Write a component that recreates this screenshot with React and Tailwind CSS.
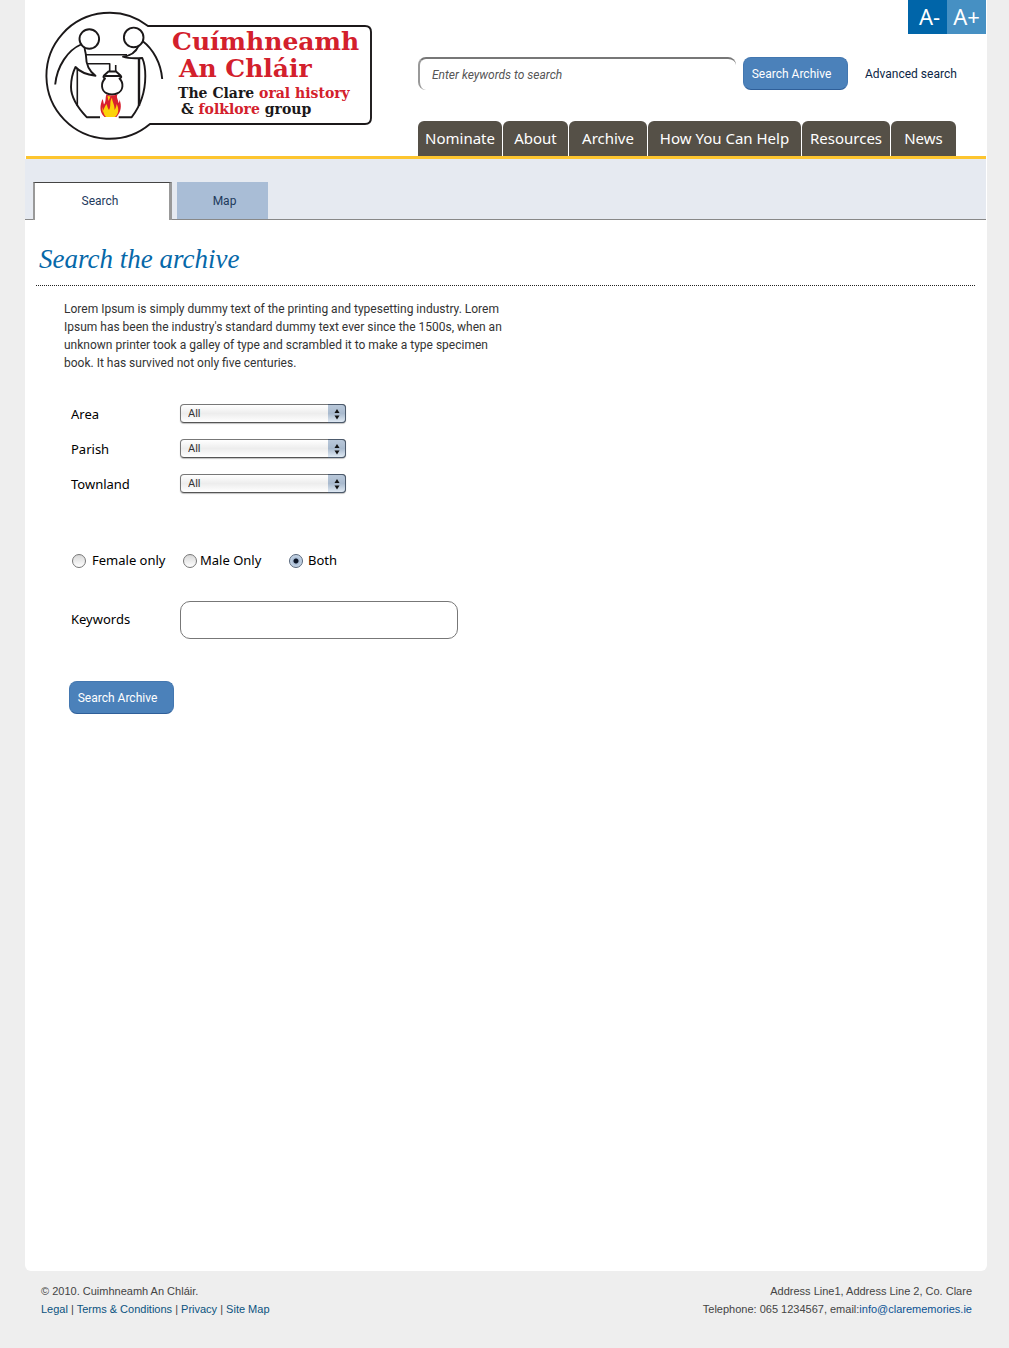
const NAV = [
  { label: "Nominate", width: "w-[84px]" },
  { label: "About", width: "w-[65px]" },
  { label: "Archive", width: "w-[78px]" },
  { label: "How You Can Help", width: "w-[153px]" },
  { label: "Resources", width: "w-[88px]" },
  { label: "News", width: "w-[65px]" },
];

function Logo() {
  return (
    <svg
      viewBox="44 11 330 130"
      className="block h-[130px] w-[330px]"
      role="img"
      aria-label="Cuímhneamh An Chláir"
    >
      <g fill="none" stroke="#1b1819" strokeWidth="1.9" strokeLinejoin="round">
        <path d="M148 26H365q6 0 6 6V118q0 6-6 6H150A63 63 0 1 1 148 26Z" fill="#fff" />
        <circle cx="89.3" cy="39" r="9.8" />
        <circle cx="133.7" cy="37.4" r="9.8" />
        <path d="M81 44.5C68 50 57 66 55.2 84.5" />
        <path d="M142.5 41C153 49 161 63 162.2 79" />
        <path d="M100 117.2H86.7C79 109 71 99 71 87C71 79 73 72 75.5 67C79 71 86 74.500 95.500 75.700C89 71 86 63 86 56C86 53 84.700 51 84.700 48" />
        <path d="M118.700 117.200H131.700C139.500 107 145.300 92 145.300 76C145.300 69 144 62 142.300 58C136 58.500 128 58.500 123 56.700C130 56 136 52 138.700 45.700" />
        <path d="M86 54.700H127M87.500 63.700H109.700V71M115.700 65V71M77.300 69V106" strokeWidth="1.600" />
        <path d="M139 59V106" strokeWidth="2.400" />
        <path d="M109 71L104 75.500Q102.500 77.500 105 78.500C100.500 83 101 91 107 93.500Q112 95.500 117 93.500C123.500 91 124 83 119.500 78.500Q122.500 77.500 120.500 75.500L115.500 71M104.500 76H120.500M109 71.500H115.500" />
      </g>
      <path
        d="M104.500 117C99 112 100 105 102.500 99C103.500 101 103.500 103 104 104.500C106.500 101 105 97 106.500 94.500Q111 96.500 117.500 94.500C116 97 118 99 118.500 103C119.500 102 119.500 100.500 119.500 99.500C122 106 121 112 116.500 117Z"
        fill="#d9202e"
      />
      <path
        d="M106 117C101.500 112 104 108 106.500 104C107.500 107 108 109 109 110C111.500 106 109 102 112 97.500C112 102 115 105 114.500 110C116 108 116.500 106 116.500 104C119.500 109 118.500 114 115 117Z"
        fill="#fcd20a"
      />
      <path d="M107.500 96L108.500 101L110.500 96.500ZM102 107L104 111L103 113Z" fill="#fcd20a" />
      <g fontFamily="'DejaVu Serif', serif" fontWeight="bold">
        <text x="172" y="50" fontSize="25" fill="#d3202c">Cuímhneamh</text>
        <text x="179" y="77" fontSize="25" fill="#d3202c">An Chláir</text>
        <text x="178" y="98" fontSize="14" fill="#1b1819">
          The Clare <tspan fill="#d3202c">oral history</tspan>
        </text>
        <text x="181" y="114" fontSize="14" fill="#1b1819">
          &amp; <tspan fill="#d3202c">folklore</tspan> group
        </text>
      </g>
    </svg>
  );
}

function SearchButton() {
  return (
    <button
      type="submit"
      className="h-[33px] w-[105px] rounded-lg border border-[#4377b0] border-b-[#2f5f99] bg-[#4b81ba] pr-2 text-center text-xs text-white"
    >
      Search Archive
    </button>
  );
}

function SelectRow({ id, label }) {
  return (
    <div className="flex h-5 items-start">
      <label htmlFor={id} className="w-[109px] leading-5">
        {label}
      </label>
      <div className="relative h-[19px] w-[166px]">
        <select
          id={id}
          className="block h-full w-full appearance-none rounded border border-[#777] border-b-[#555] bg-linear-to-b from-white via-[#ededed] to-white pl-[7px] font-['Roboto',sans-serif] text-[11px] leading-4 text-[#333] shadow-[0_1px_1px_rgba(0,0,0,0.25)]"
        >
          <option>All</option>
        </select>
        <span className="pointer-events-none absolute inset-y-0 right-0 flex w-[18px] items-center justify-center rounded-r border border-l-0 border-[#4c5a6c] bg-linear-to-b from-[#b9c8da] via-[#a9bace] to-[#dfe9f3]">
          <svg viewBox="0 0 6 12" className="h-3 w-1.5" aria-hidden="true">
            <path d="M3 1L5.500 5H0.500ZM3 11.500L5.500 7.500H0.500Z" fill="#111" />
          </svg>
        </span>
      </div>
    </div>
  );
}

function RadioOption({ label, className, defaultChecked }) {
  return (
    <label className={"flex items-center " + className}>
      <input
        type="radio"
        name="gender"
        defaultChecked={defaultChecked}
        className="size-3.5 appearance-none rounded-full border border-[#777] bg-linear-to-b from-[#d8d8d8] to-white checked:border-[#56657a] checked:bg-[radial-gradient(circle,#0c1526_0_2px,#a9bcd4_3px,#c9d8e8_6px)]"
      />
      {label}
    </label>
  );
}

export default function App() {
  return (
    <div className="flex min-h-screen flex-col bg-[#eee] pr-[22px] pl-[25px] font-['Roboto',sans-serif] text-xs text-[#333]">
      <div className="flex-1 rounded-b-md bg-white">
        <header className="mr-px ml-px flex justify-between border-b-[3px] border-[#fdc52f]">
          <div className="pt-[11px] pl-[18px]">
            <Logo />
          </div>
          <div className="w-[568px]">
            <div className="flex h-[34px] justify-end font-['Noto_Sans',sans-serif] text-[22px] text-white">
              <button type="button" aria-label="Decrease text size" className="w-[39px] bg-[#0065a9] pl-1">
                A-
              </button>
              <button type="button" aria-label="Increase text size" className="w-[39px] bg-[#4690c3]">
                A+
              </button>
            </div>
            <form className="mt-[23px] flex items-center" onSubmit={(e) => e.preventDefault()}>
              <input
                type="search"
                aria-label="Enter keywords to search"
                placeholder="Enter keywords to search"
                className="mr-[7px] h-[33px] w-[318px] rounded-lg border-t-2 border-l-2 border-t-[#777] border-l-[#999] pl-3 italic outline-none placeholder:text-[#555]"
              />
              <SearchButton />
              <a href="#advanced" className="ml-[17px] text-[#0b2545]">
                Advanced search
              </a>
            </form>
            <nav className="mt-[31px] flex gap-px font-['Noto_Sans',sans-serif] text-[15px] text-white">
              {NAV.map(({ label, width }) => (
                <a
                  key={label}
                  href="#"
                  className={"flex h-[35px] items-center justify-center rounded-t-md bg-[#555047] pb-0.5 whitespace-nowrap " + width}
                >
                  {label}
                </a>
              ))}
            </nav>
          </div>
        </header>

        <nav className="mr-px flex h-[61px] items-end border-b border-[#888] bg-[#e6eaf1] pl-2 text-[#1e3a5c]">
          <a
            href="#search"
            className="-mb-px flex h-[38px] w-[139px] items-center justify-center border-t border-r-[3px] border-l-2 border-t-[#444] border-r-[#999] border-l-[#999] bg-white pr-1 pb-0.5"
          >
            Search
          </a>
          <a href="#map" className="ml-[5px] flex h-[37px] w-[91px] items-center justify-center bg-[#a9bdd6] pl-1">
            Map
          </a>
        </nav>

        <main className="pr-3 pl-[11px]">
          <h1 className="border-b border-dotted border-[#222] pt-[23px] pb-2.5 pl-[3px] font-['Liberation_Serif',serif] text-[27px] leading-8 text-[#0668a9] italic">
            Search the archive
          </h1>
          <p className="mt-3.5 ml-7 max-w-[460px] leading-[18px]">
            Lorem Ipsum is simply dummy text of the printing and typesetting industry. Lorem
            <br />
            Ipsum has been the industry's standard dummy text ever since the 1500s, when an
            <br />
            unknown printer took a galley of type and scrambled it to make a type specimen
            <br />
            book. It has survived not only five centuries.
          </p>
          <form
            className="mt-8 ml-[35px] font-['Noto_Sans',sans-serif] text-[13px] text-black"
            onSubmit={(e) => e.preventDefault()}
          >
            <div className="flex flex-col gap-[15px]">
              <SelectRow id="area" label="Area" />
              <SelectRow id="parish" label="Parish" />
              <SelectRow id="townland" label="Townland" />
            </div>
            <fieldset className="mt-[57px] flex h-5">
              <RadioOption label="Female only" className="w-[112px] gap-1.5 pl-px" />
              <RadioOption label="Male Only" className="w-[106px] gap-[3px]" />
              <RadioOption label="Both" className="gap-[5px]" defaultChecked />
            </fieldset>
            <div className="mt-[30px] flex items-center">
              <label htmlFor="keywords" className="w-[109px]">
                Keywords
              </label>
              <input
                id="keywords"
                type="text"
                className="h-[38px] w-[278px] rounded-[10px] border border-[#777] px-3 outline-none"
              />
            </div>
            <div className="mt-[42px] -ml-0.5 font-['Roboto',sans-serif]">
              <SearchButton />
            </div>
          </form>
        </main>
      </div>

      <footer className="flex justify-between pt-[11px] pr-[15px] pb-[30px] pl-4 font-['Liberation_Sans',sans-serif] text-[11px] leading-[18px] text-[#444]">
        <div>
          <p>© 2010. Cuimhneamh An Chláir.</p>
          <p>
            <a href="#legal" className="text-[#0b5380]">Legal</a> |{" "}
            <a href="#terms" className="text-[#0b5380]">Terms &amp; Conditions</a> |{" "}
            <a href="#privacy" className="text-[#0b5380]">Privacy</a> |{" "}
            <a href="#sitemap" className="text-[#0b5380]">Site Map</a>
          </p>
        </div>
        <address className="text-right not-italic">
          Address Line1, Address Line 2, Co. Clare
          <br />
          Telephone: 065 1234567, email:
          <a href="mailto:info@clarememories.ie" className="text-[#0b5394]">info@clarememories.ie</a>
        </address>
      </footer>
    </div>
  );
}
